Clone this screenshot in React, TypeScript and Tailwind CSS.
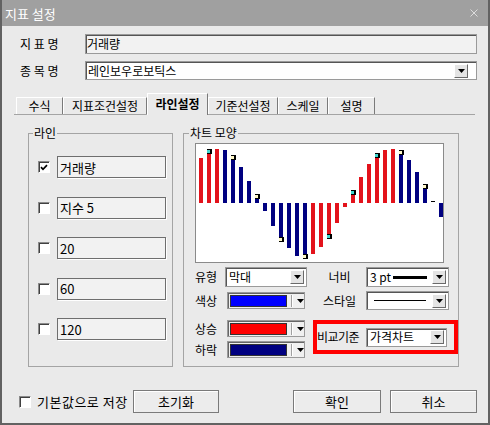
import React from 'react';

type Bar = { v: number; c: 'r' | 'b' | 'k'; m?: 'c' | 'y' };

const bars: Bar[] = [
  { v: 45, c: 'r' }, { v: 54, c: 'r', m: 'c' }, { v: 54, c: 'r' }, { v: 53, c: 'b' },
  { v: 48, c: 'b', m: 'y' }, { v: 36, c: 'b' }, { v: 22, c: 'b' }, { v: 9, c: 'b', m: 'y' },
  { v: -8, c: 'b' }, { v: -23, c: 'b' }, { v: -39, c: 'b', m: 'y' }, { v: -45, c: 'b' },
  { v: -53, c: 'b' }, { v: -56, c: 'b', m: 'y' }, { v: -51, c: 'r' }, { v: -44, c: 'r' },
  { v: -36, c: 'r', m: 'c' }, { v: -20, c: 'r' }, { v: -4, c: 'r' }, { v: 13, c: 'r', m: 'c' },
  { v: 26, c: 'r' }, { v: 39, c: 'r' }, { v: 50, c: 'r', m: 'c' }, { v: 53, c: 'r' },
  { v: 54, c: 'r' }, { v: 53, c: 'b', m: 'y' }, { v: 43, c: 'b' }, { v: 31, c: 'b' },
  { v: 19, c: 'b', m: 'y' }, { v: 0, c: 'k' }, { v: -14, c: 'b' },
];

const tabs: [string, number, boolean?][] = [
  ['수식', 47], ['지표조건설정', 84], ['라인설정', 61, true], ['기준선설정', 70], ['스케일', 50], ['설명', 47],
];

function Arrow() {
  return (
    <svg width="7" height="4" viewBox="0 0 7 4">
      <polygon points="0,0 7,0 3.5,4" fill="#000" />
    </svg>
  );
}

function DropBtn() {
  return (
    <div className="w-[14px] h-[14px] shrink-0 bg-[#e4e4e4] border border-t-white border-l-white border-r-[#6a6a6a] border-b-[#6a6a6a] flex items-center justify-center">
      <Arrow />
    </div>
  );
}

function Combo({ w, h, children }: { w: string; h: string; children: React.ReactNode }) {
  return (
    <div className={`${w} ${h} bg-white border border-[#9a9a9a] shadow-[inset_1px_1px_0_#555555] flex items-center pl-[3px] pr-[2px]`}>
      <div className="flex-1 flex items-center text-[12px] leading-none">{children}</div>
      <DropBtn />
    </div>
  );
}

function ColorBox({ color }: { color: string }) {
  return (
    <div className="w-[78px] h-[17px] bg-[#f0f0f0] border border-[#9a9a9a] shadow-[inset_1px_1px_0_#666666] flex items-center pl-[2px]">
      <div className="w-[58px] h-[12px] border border-[#333333]" style={{ background: color }} />
      <div className="ml-[4px] w-px h-[12px] bg-[#a0a0a0] shadow-[1px_0_0_#ffffff]" />
      <div className="ml-[5px] flex items-center"><Arrow /></div>
    </div>
  );
}

function Check({ checked }: { checked?: boolean }) {
  return (
    <div className="w-[12px] h-[12px] shrink-0 bg-white border border-t-[#8a8a8a] border-l-[#8a8a8a] border-b-white border-r-white shadow-[inset_1px_1px_0_#404040] flex items-center justify-center">
      {checked && (
        <svg width="8" height="7" viewBox="0 0 8 7">
          <path d="M1 3.2 L3 5.3 L7 1.2" stroke="#000" strokeWidth="1.7" fill="none" />
        </svg>
      )}
    </div>
  );
}

function LineRow({ checked, label }: { checked?: boolean; label: string }) {
  return (
    <div className="flex items-center h-[22px]">
      <Check checked={checked} />
      <div className="ml-[7px] w-[109px] h-[22px] bg-[#f2f2f2] border border-[#6e6e6e] shadow-[1px_1px_0_#ffffff] flex items-center pl-[2px] text-[13px] leading-none">
        {label}
      </div>
    </div>
  );
}

function Chart() {
  const zero = 59;
  return (
    <div className="w-[249px] h-[120px] bg-white border border-[#8a8a8a]">
      <svg width="247" height="118" viewBox="0 0 247 118">
        {bars.map((b, i) => {
          const x = 3 + 8 * i;
          if (b.c === 'k') return <rect key={i} x={x} y={zero - 2} width="4" height="1" fill="#000" />;
          const fill = b.c === 'r' ? '#e3121b' : '#000080';
          const y = b.v >= 0 ? zero - b.v : zero;
          const h = Math.abs(b.v);
          const my = b.v >= 0 ? y : zero + h - 5;
          return (
            <g key={i}>
              <rect x={x} y={y} width="4" height={h} fill={fill} />
              {b.m && (
                <g>
                  <rect x={x} y={my} width="5" height="5" fill="#000" />
                  <rect x={x} y={my + 1} width="3" height="3" fill={b.m === 'c' ? '#3fd7d0' : '#fff8c8'} />
                </g>
              )}
            </g>
          );
        })}
      </svg>
    </div>
  );
}

export default function App() {
  return (
    <div className="w-[490px] h-[425px] bg-[#eaeaea] border-x-2 border-b-2 border-[#626262] flex flex-col font-['Noto_Sans_CJK_KR',sans-serif] text-black">
      <div className="h-[26px] shrink-0 bg-[#a0a0a0] flex items-center justify-between pl-[3px] pr-[10px] text-white text-[13px] leading-none">
        <span>지표 설정</span>
        <svg width="8" height="8" viewBox="0 0 8 8">
          <path d="M0.5 0.5 L7.5 7.5 M7.5 0.5 L0.5 7.5" stroke="#dcdcdc" strokeWidth="1" />
        </svg>
      </div>

      <div className="mt-[8px] h-[20px] flex items-center">
        <div className="w-[83px] pl-[18px] text-[12px] leading-none">지 표 명</div>
        <div className="w-[392px] h-[20px] bg-[#f2f2f2] border border-[#9a9a9a] shadow-[inset_1px_1px_0_#555555] flex items-center pl-[1px] text-[12px] leading-none">
          거래량
        </div>
      </div>

      <div className="mt-[7px] h-[19px] flex items-center">
        <div className="w-[83px] pl-[18px] text-[12px] leading-none">종 목 명</div>
        <div className="w-[392px] h-[19px] bg-white border border-[#9a9a9a] shadow-[inset_1px_1px_0_#555555] flex items-center pl-[2px] pr-[8px] text-[12px] leading-none">
          <span className="flex-1">레인보우로보틱스</span>
          <DropBtn />
        </div>
      </div>

      <div className="mt-[13px] h-[21px] flex items-end pl-[14px] relative z-10">
        {tabs.map(([t, w, active]) => (
          <div
            key={t}
            style={{ width: w }}
            className={
              active
                ? 'h-[22px] -mb-px bg-[#eaeaea] border-t border-l border-t-white border-l-white border-r border-r-[#7a7a7a] flex items-center justify-center text-[12px] font-bold leading-none pb-[2px]'
                : 'h-[17px] border-t border-l border-t-white border-l-white border-r border-r-[#7a7a7a] flex items-center justify-center text-[12px] leading-none'
            }
          >
            {t}
          </div>
        ))}
      </div>
      <div className="ml-[12px] w-[461px] h-px bg-[#a4a4a4]" />

      <div className="mt-[10px] flex pl-[26px]">
        <fieldset className="w-[145px] h-[242px] border border-[#a4a4a4] p-0 m-0">
          <legend className="ml-[4px] px-[1px] text-[12px] leading-[16px]">라인</legend>
          <div className="pt-[15px] pl-[9px] flex flex-col gap-[18.5px]">
            <LineRow checked label="거래량" />
            <LineRow label="지수 5" />
            <LineRow label="20" />
            <LineRow label="60" />
            <LineRow label="120" />
          </div>
        </fieldset>

        <fieldset className="ml-[10px] w-[273px] h-[242px] border border-[#a4a4a4] p-0 m-0">
          <legend className="ml-[5px] px-[1px] text-[12px] leading-[16px]">차트 모양</legend>
          <div className="pt-[2px] pl-[11px]">
            <Chart />
            <div className="flex text-[12px] leading-none">
              <div className="w-[118px] flex flex-col">
                <div className="mt-[4px] h-[20px] flex items-center">
                  <span className="w-[30px]">유형</span>
                  <Combo w="w-[82px]" h="h-[20px]">막대</Combo>
                </div>
                <div className="mt-[5px] h-[17px] flex items-center">
                  <span className="w-[32px]">색상</span>
                  <ColorBox color="#0000ff" />
                </div>
                <div className="mt-[11px] h-[17px] flex items-center">
                  <span className="w-[32px]">상승</span>
                  <ColorBox color="#ff0000" />
                </div>
                <div className="mt-[4px] h-[17px] flex items-center">
                  <span className="w-[32px]">하락</span>
                  <ColorBox color="#000080" />
                </div>
              </div>

              <div className="w-[145px] shrink-0 flex flex-col">
                <div className="mt-[4px] h-[20px] flex items-center">
                  <span className="w-[53px] text-center">너비</span>
                  <Combo w="w-[83px]" h="h-[20px]">
                    <span>3 pt</span>
                    <span className="ml-[2px] w-[34px] h-[3px] bg-black" />
                  </Combo>
                </div>
                <div className="mt-[4px] h-[19px] flex items-center">
                  <span className="w-[53px] text-center">스타일</span>
                  <Combo w="w-[83px]" h="h-[19px]">
                    <span className="ml-[4px] w-[52px] h-px bg-black" />
                  </Combo>
                </div>
                <div className="mt-[10px] h-[34px] border-4 border-[#ff0000] flex items-center relative z-10">
                  <span className="w-[49px] tracking-[-0.5px]">비교기준</span>
                  <Combo w="w-[81px]" h="h-[19px]">가격차트</Combo>
                </div>
              </div>
            </div>
          </div>
        </fieldset>
      </div>

      <div className="mt-[23px] h-[23px] flex items-center pl-[17px] text-[13px] leading-none">
        <Check />
        <span className="ml-[6px] w-[96px] tracking-[0.5px]">기본값으로 저장</span>
        <button className="w-[86px] h-[23px] bg-[#ececec] border border-[#7a7a7a] shadow-[inset_1px_1px_0_#ffffff]">초기화</button>
        <button className="ml-[74px] w-[88px] h-[23px] bg-[#ececec] border border-[#7a7a7a] shadow-[inset_1px_1px_0_#ffffff]">확인</button>
        <button className="ml-[9px] w-[87px] h-[23px] bg-[#ececec] border border-[#7a7a7a] shadow-[inset_1px_1px_0_#ffffff]">취소</button>
      </div>
    </div>
  );
}
